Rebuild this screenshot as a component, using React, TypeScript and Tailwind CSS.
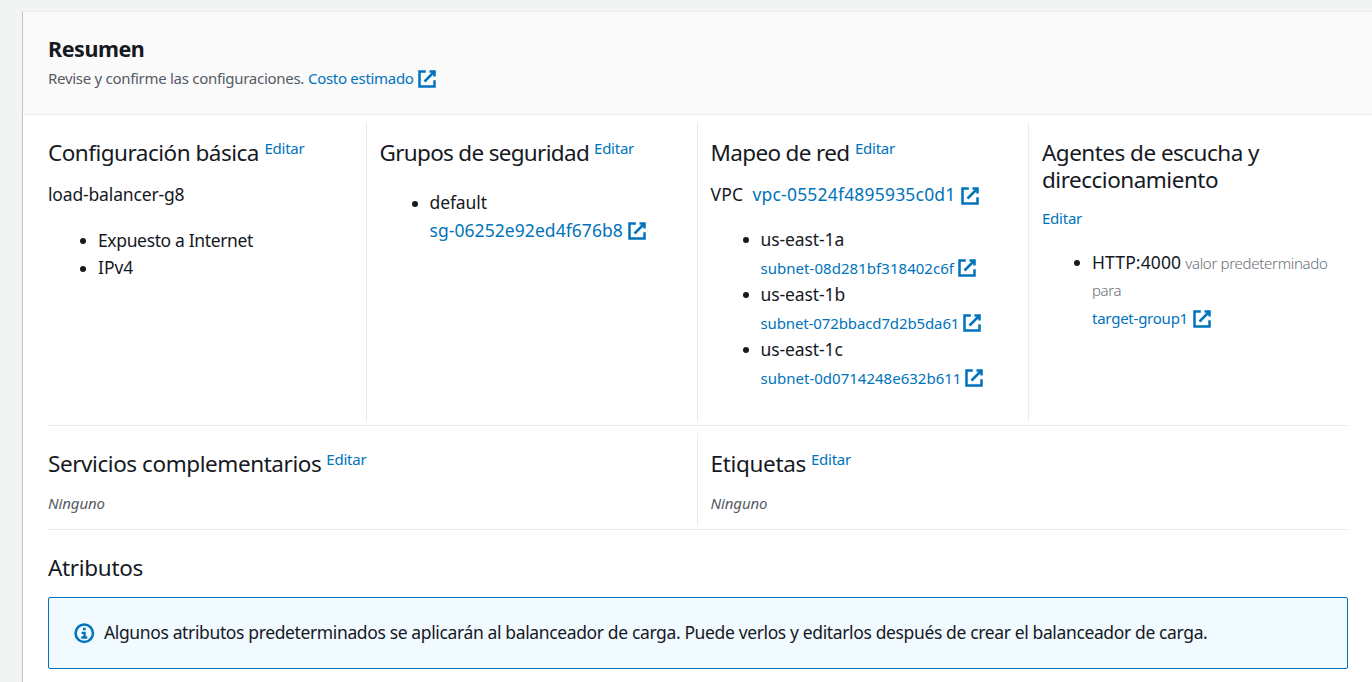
import type { ReactNode } from "react";

function ExternalIcon({ className = "" }: { className?: string }) {
  return (
    <svg viewBox="0 0 16 16" className={`size-5 shrink-0 ${className}`} fill="none" stroke="#0073bb" strokeWidth="2">
      <path d="M10 2h4v4" />
      <path d="M6 10l8-8" />
      <path d="M14 9.05V14H2V2h5.04" />
    </svg>
  );
}

function InfoIcon() {
  return (
    <svg viewBox="0 0 16 16" className="size-[22.5px] shrink-0" fill="none" stroke="#0073bb" strokeWidth="1.8">
      <circle cx="8" cy="8" r="6.2" />
      <path d="M5.9 11h4.2M6.1 7.7h2.1v3.3M7.1 5h1.9" strokeWidth="1.7" />
    </svg>
  );
}

function Heading({ children, editLabel }: { children: ReactNode; editLabel?: ReactNode }) {
  return (
    <div className="flex whitespace-nowrap">
      <h3 className="text-[22.5px] leading-[27px] font-normal">{children}</h3>
      {editLabel}
    </div>
  );
}

function Edit({ className = "" }: { className?: string }) {
  return (
    <a className={`text-[15px] leading-[19px] tracking-[-0.24px] text-[#0073bb] ${className}`}>Editar</a>
  );
}

function Item({ children }: { children: ReactNode }) {
  return (
    <li className="flex leading-[27.5px]">
      <span className="mt-[11.5px] mr-[12px] ml-[32px] size-[6px] shrink-0 rounded-full bg-[#16191f]" />
      <div>{children}</div>
    </li>
  );
}

function SubnetItem({ zone, children }: { zone: string; children: ReactNode }) {
  return (
    <Item>
      <div className="tracking-[-0.1px]">{zone}</div>
      <a className="flex h-[27.5px] items-center pt-[3px] text-[15px] text-[#0073bb]">
        {children}
        <ExternalIcon className="ml-[3px]" />
      </a>
    </Item>
  );
}

export default function App() {
  return (
    <div className="h-[682px] w-[1372px] overflow-hidden bg-[#f2f3f3] pt-[11px] pl-[22px] font-['Noto_Sans',sans-serif] text-[17.5px] leading-[27.5px] text-[#16191f]">
      <main className="h-[671px] border-t border-l border-t-[#eaeded] border-l-[#bfc5c9] bg-white">
        <header className="h-[103px] border-b border-[#eaeded] bg-[#fafafa] pt-[23px] pl-[25px]">
          <h2 className="text-[21.5px] leading-[27.5px] font-bold tracking-[-0.45px]">Resumen</h2>
          <p className="mt-[2.5px] flex h-[27.5px] items-center text-[15px] text-[#545b64]">
            <span className="w-[260px] tracking-[-0.29px]">Revise y confirme las configuraciones.</span>
            <a className="flex items-center text-[#0073bb]">
              <span className="w-[109px] tracking-[-0.3px]">Costo estimado</span>
              <ExternalIcon />
            </a>
          </p>
        </header>

        <div className="mr-[24px] ml-[25px]">
          <section className="flex h-[311px] border-b border-[#eaeded] pt-[7px] pb-[3px]">
            <div className="w-[318px] pt-[17px]">
              <Heading editLabel={<Edit className="ml-[5.5px]" />}>
                <span className="tracking-[-0.5px]">Configuración básica</span>
              </Heading>
              <p className="mt-[15px] tracking-[-0.16px]">load-balancer-g8</p>
              <ul className="mt-[18px]">
                <Item><span className="tracking-[-0.36px]">Expuesto a Internet</span></Item>
                <Item><span className="tracking-[-0.05px]">IPv4</span></Item>
              </ul>
            </div>

            <div className="w-[331px] border-l border-[#eaeded] pt-[17px] pl-[12.5px]">
              <Heading editLabel={<Edit className="ml-[5px]" />}>
                <span className="tracking-[-0.69px]">Grupos de seguridad</span>
              </Heading>
              <ul className="mt-[23px]">
                <Item>
                  <div className="tracking-[-0.1px]">default</div>
                  <a className="flex items-center tracking-[0.06px] text-[#0073bb]">
                    sg-06252e92ed4f676b8
                    <ExternalIcon className="mt-[2px] ml-[4px]" />
                  </a>
                </Item>
              </ul>
            </div>

            <div className="w-[331px] border-l border-[#eaeded] pt-[17px] pl-[12.5px]">
              <Heading editLabel={<Edit className="ml-[5.5px]" />}>
                <span className="tracking-[-0.65px]">Mapeo de red</span>
              </Heading>
              <p className="mt-[15px] flex items-center">
                <span className="w-[42px] tracking-[0.2px]">VPC</span>
                <a className="flex items-center tracking-[0.19px] text-[#0073bb]">
                  vpc-05524f4895935c0d1
                  <ExternalIcon className="mt-[2px] ml-[4px]" />
                </a>
              </p>
              <ul className="mt-[17px]">
                <SubnetItem zone="us-east-1a"><span className="tracking-[0.04px]">subnet-08d281bf318402c6f</span></SubnetItem>
                <SubnetItem zone="us-east-1b"><span className="tracking-[-0.12px]">subnet-072bbacd7d2b5da61</span></SubnetItem>
                <SubnetItem zone="us-east-1c"><span className="tracking-[0.01px]">subnet-0d0714248e632b611</span></SubnetItem>
              </ul>
            </div>

            <div className="flex-1 border-l border-[#eaeded] pt-[17px] pl-[13px]">
              <Heading>
                <span className="block tracking-[-0.52px]">Agentes de escucha y</span>
                <span className="block tracking-[-0.49px]">direccionamiento</span>
              </Heading>
              <p className="mt-[12px] flex h-[27.5px] items-center"><Edit /></p>
              <ul className="mt-[16px]">
                <Item>
                  <div className="whitespace-nowrap">
                    <span className="tracking-[0.12px]">HTTP:4000</span>
                    <span className="ml-[4px] text-[15px] font-light tracking-[-0.3px] text-[#687078]">valor predeterminado</span>
                  </div>
                  <div className="text-[15px] font-light tracking-[-0.41px] text-[#687078]">para</div>
                  <a className="flex items-center text-[15px] tracking-[-0.24px] text-[#0073bb]">
                    target-group1
                    <ExternalIcon className="mt-[1px] ml-[4.5px]" />
                  </a>
                </Item>
              </ul>
            </div>
          </section>

          <section className="flex h-[104px] border-b border-[#eaeded] pt-[7px] pb-[3px]">
            <div className="w-[649px] pt-[17px]">
              <Heading editLabel={<Edit className="ml-[5px]" />}>
                <span className="tracking-[-0.43px]">Servicios complementarios</span>
              </Heading>
              <p className="mt-[13px] text-[15px] tracking-[-0.1px] text-[#545b64] italic">Ninguno</p>
            </div>
            <div className="flex-1 border-l border-[#eaeded] pt-[17px] pl-[12.5px]">
              <Heading editLabel={<Edit className="ml-[5px]" />}>
                <span className="tracking-[-0.33px]">Etiquetas</span>
              </Heading>
              <p className="mt-[13px] text-[15px] tracking-[-0.1px] text-[#545b64] italic">Ninguno</p>
            </div>
          </section>

          <section className="pt-[24px]">
            <Heading><span className="tracking-[-0.32px]">Atributos</span></Heading>
            <div className="mt-[16px] flex h-[72px] items-center rounded-[2px] border border-[#0073bb] bg-[#f1faff] pl-[24px]">
              <InfoIcon />
              <p className="ml-[8.5px] tracking-[-0.37px] whitespace-nowrap">
                Algunos atributos predeterminados se aplicarán al balanceador de carga. Puede verlos y editarlos después de crear el balanceador de carga.
              </p>
            </div>
          </section>
        </div>
      </main>
    </div>
  );
}
